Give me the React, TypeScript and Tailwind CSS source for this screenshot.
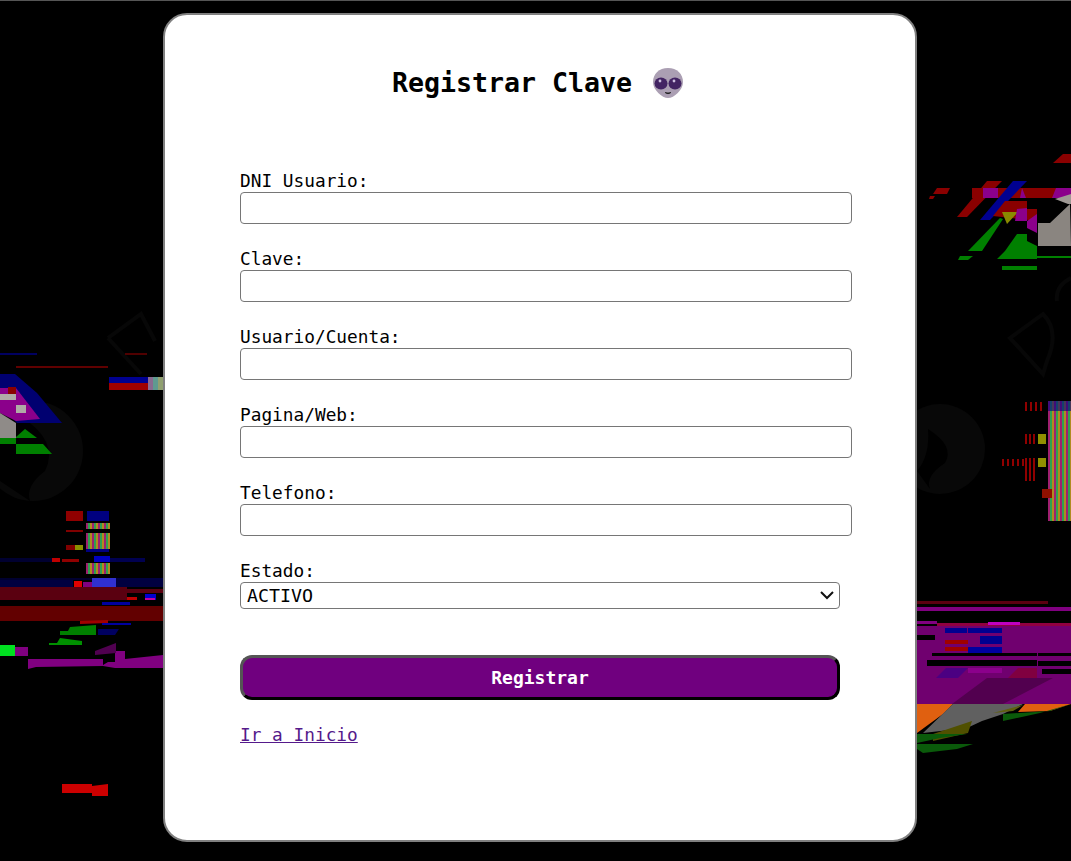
import React from 'react';

const fields = ['DNI Usuario:', 'Clave:', 'Usuario/Cuenta:', 'Pagina/Web:', 'Telefono:'];

// [color, points]
const shapes: [string, string][] = [
  // left glitch, top
  ['#000070', '0,373 15,373 37,392 62,422 17,422 0,405'],
  ['#8b008b', '0,387 16,387 40,418 16,420 0,412'],
  ['#8a0000', '8,386 16,386 16,393 8,393'],
  ['#b0aaa6', '0,393 16,393 16,399 0,399'],
  ['#b0aaa6', '16,404 26,404 26,412 16,412'],
  ['#8f8b88', '0,412 16,422 16,437 0,437'],
  ['#008000', '0,437 16,437 16,443 0,443'],
  ['#008000', '16,436 25,428 37,437 16,437'],
  ['#008000', '16,443 43,443 52,453 16,453'],
  // left glitch, block above the card edge
  ['#000090', '109,376 148,376 148,382 109,382'],
  ['#a00000', '109,382 148,382 148,389 109,389'],
  ['#8a6a90', '148,376 153,376 153,389 148,389'],
  ['#5f9a90', '153,376 158,376 158,389 153,389'],
  ['#90a070', '158,376 163,376 163,389 158,389'],
  ['#600000', '16,365 108,365 108,367 16,367'],
  ['#000060', '0,352 37,352 37,354 0,354'],
  ['#500000', '125,352 147,352 147,354 125,354'],
  // left glitch, middle column
  ['#900000', '66,510 83,510 83,520 66,520'],
  ['#000080', '87,510 109,510 109,520 87,520'],
  ['#800000', '66,529 83,529 83,531 66,531'],
  ['#800000', '66,544 75,544 75,549 66,549'],
  ['#8a9000', '75,544 83,544 83,549 75,549'],
  ['#000080', '86,548 109,548 109,551 86,551'],
  ['#000030', '0,557 52,557 52,561 0,561'],
  ['#c00000', '52,557 60,557 60,561 52,561'],
  ['#900000', '62,558 79,558 79,561 62,561'],
  ['#0000c0', '94,555 110,555 110,561 94,561'],
  ['#000050', '110,557 145,557 145,561 110,561'],
  ['#000030', '0,577 163,577 163,579 0,579'],
  ['#000040', '0,579 73,579 73,586 0,586'],
  ['#e00000', '74,580 82,580 82,587 74,587'],
  ['#800080', '83,581 92,581 92,587 83,587'],
  ['#3030d0', '92,577 116,577 116,587 92,587'],
  ['#000040', '116,577 163,577 163,586 116,586'],
  // left dark red bands
  ['#5a0010', '0,586 127,586 127,599 0,599'],
  ['#5a0010', '127,588 163,588 163,592 127,592'],
  ['#c00000', '127,596 137,596 137,599 127,599'],
  ['#0000d0', '145,593 156,593 156,599 145,599'],
  ['#c000a0', '145,597 155,597 155,599 145,599'],
  ['#0000a0', '102,601 130,601 130,604 102,604'],
  ['#620000', '0,605 163,605 163,620 0,620'],
  ['#a00000', '80,620 108,619 108,622 80,623'],
  ['#0000a0', '102,622 131,622 131,624 102,624'],
  ['#008000', '60,630 68,630 70,626 96,624 96,634 60,634'],
  ['#000060', '98,628 119,628 115,634 98,634'],
  ['#009000', '49,642 57,642 60,637 82,640 82,644 49,644'],
  ['#00e020', '0,644 15,644 15,655 0,655'],
  ['#800080', '15,646 28,646 28,655 15,655'],
  ['#800080', '28,658 103,658 103,664 108,661 115,661 115,650 125,650 125,658 163,654 163,667 115,667 103,665 36,666 28,668'],
  ['#500050', '95,650 116,642 116,652 95,654'],
  // bottom red
  ['#cc0000', '62,783 92,783 92,785 108,783 108,795 92,795 92,792 62,792'],
  // right glitch, top
  ['#8a0000', '1053,162 1063,153 1071,153 1071,162'],
  ['#8a0000', '937,187 950,187 947,193 933,193'],
  ['#8a0000', '930,195 935,195 933,198 929,198'],
  ['#8a0000', '972,187 1071,187 1060,197 972,197'],
  ['#8a0000', '987,180 1002,180 967,216 957,216'],
  ['#000090', '1013,180 1027,180 990,219 980,219'],
  ['#8b008b', '983,187 998,187 998,197 983,197'],
  ['#8b008b', '1022,187 1026,197 1020,197'],
  ['#8b008b', '1056,187 1071,187 1071,197 1052,197'],
  ['#8a0000', '1005,200 1027,200 1027,208 1037,208 1037,220 993,215'],
  ['#8a8a00', '1002,211 1018,211 1007,223'],
  ['#8b008b', '1017,208 1027,207 1027,220 1015,220'],
  ['#8b008b', '1027,220 1037,213 1037,232 1027,227'],
  ['#008000', '1000,217 968,250 982,250 1003,218'],
  ['#008000', '1017,233 1027,233 1027,240 1037,245 1037,258 997,258 1005,250'],
  ['#008000', '960,255 973,255 968,259 958,259'],
  ['#008000', '1037,255 1071,255 1071,257 1037,257'],
  ['#008000', '1002,265 1037,265 1037,269 1002,269'],
  ['#8a8580', '1038,222 1050,222 1070,203 1071,245 1038,245'],
  ['#a09a95', '1055,198 1071,193 1071,203 1068,203'],
  // right glitch, bottom
  ['#5a0010', '917,600 1048,600 1048,603 917,603'],
  ['#800080', '917,606 1071,606 1071,610 917,610'],
  ['#800080', '917,620 937,620 937,623 917,623'],
  ['#900040', '937,622 1071,622 1071,625 937,625'],
  ['#c000c0', '988,621 1020,621 1020,624 988,624'],
  ['#70006f', '917,625 1071,625 1071,703 917,703'],
  ['#000090', '945,627 967,627 967,632 945,632'],
  ['#000090', '968,627 1002,627 1002,632 968,632'],
  ['#000000', '917,634 935,634 935,639 917,639'],
  ['#000090', '980,635 1002,635 1002,643 980,643'],
  ['#a00000', '945,639 968,639 968,643 945,643'],
  ['#a00000', '945,646 968,646 968,650 945,650'],
  ['#0000a0', '968,646 1002,646 1002,653 968,653'],
  ['#000000', '932,652 1037,652 1037,655 932,655'],
  ['#000000', '1038,652 1071,652 1071,655 1038,655'],
  ['#000000', '927,659 1037,659 1037,665 927,665'],
  ['#000000', '1038,660 1071,660 1071,665 1038,665'],
  ['#000000', '1042,668 1071,668 1071,673 1042,673'],
  ['#4b0082', '946,667 968,667 958,677 936,677'],
  ['#8b008b', '968,667 1002,667 1002,672 968,672'],
  ['#800040', '1018,667 1037,667 1037,677 1008,677'],
  ['#52004f', '987,677 1053,677 1003,703 952,703'],
  ['#e06010', '917,703 953,703 943,713 917,732'],
  ['#606060', '953,703 1023,703 1003,713 982,720 967,727 923,732'],
  ['#e06010', '1025,703 1071,703 1050,710 1018,711'],
  ['#606010', '993,712 1023,704 1013,710'],
  ['#0a5a0a', '1003,713 1050,710 1071,703 1040,712 1003,720'],
  ['#505000', '933,733 972,720 968,732 933,740'],
  ['#0a5a0a', '917,733 967,733 940,737 917,742'],
  ['#0a5a0a', '917,743 973,743 957,748 923,752 917,748'],
];

// vertical colour fringes of the broken image: [x, y, width, height]
const stripeBlocks = [
  [1048, 400, 23, 120],
  [86, 522, 23, 6],
  [86, 532, 23, 11],
  [86, 543, 23, 5],
  [86, 562, 23, 11],
];

function Background() {
  return (
    <svg className="absolute inset-0" width="1071" height="861" viewBox="0 0 1071 861">
      {/* faded logo watermarks */}
      <circle cx="33" cy="450" r="50" fill="#080808" />
      <path d="M20 415 Q60 440 45 470 Q25 485 30 500 L0 480 L0 420 Z" fill="#000" />
      <circle cx="940" cy="448" r="45" fill="#080808" />
      <path d="M928 428 Q955 445 945 462 Q925 475 930 488 L917 470 Q930 455 928 428 Z" fill="#000" />
      <path d="M108 337 L141 313 L155 340 M108 337 L141 373" stroke="#070707" strokeWidth="4" fill="none" />
      <path d="M1010 337 L1043 313 Q1060 330 1047 360 L1043 373 Z" stroke="#070707" strokeWidth="4" fill="none" />
      <path d="M1057 300 Q1055 285 1071 277" stroke="#070707" strokeWidth="4" fill="none" />
      {shapes.map(([color, points], i) => (
        <polygon key={i} points={points} fill={color} />
      ))}
      {stripeBlocks.map(([x, y, w, h]) =>
        Array.from({ length: Math.ceil(w / 6) }, (_, i) => (
          <g key={`${x}-${y}-${i}`}>
            <rect x={x + i * 6} y={y} width="2" height={h} fill="#a02070" />
            <rect x={x + i * 6 + 2} y={y} width="2" height={h} fill="#30a050" />
            <rect x={x + i * 6 + 4} y={y} width="2" height={h} fill="#b08a20" />
          </g>
        )),
      )}
      <rect x="1048" y="400" width="23" height="10" fill="#000080" opacity="0.6" />
      {[1025, 1030, 1035, 1040].map((x) => (
        <rect key={x} x={x} y="401" width="2" height="9" fill="#900000" />
      ))}
      {[1025, 1029, 1033].map((x) => (
        <g key={x}>
          <rect x={x} y="433" width="2" height="10" fill="#900000" />
          <rect x={x} y="457" width="2" height="8" fill="#900000" />
          <rect x={x} y="465" width="2" height="15" fill="#900000" />
        </g>
      ))}
      <rect x="1038" y="433" width="8" height="10" fill="#909000" />
      <rect x="1038" y="457" width="8" height="9" fill="#909000" />
      {[1002, 1007, 1012, 1017, 1022].map((x) => (
        <rect key={x} x={x} y="458" width="2" height="7" fill="#900000" />
      ))}
      <rect x="1042" y="488" width="10" height="9" fill="#901000" />
    </svg>
  );
}

function AlienIcon() {
  return (
    <svg width="30" height="30" viewBox="0 0 30 30">
      <path d="M15 0 C24 0 30 6 30 14 C30 22 21 30 15 30 C9 30 0 22 0 14 C0 6 6 0 15 0 Z" fill="#ab9fb3" />
      <ellipse cx="8" cy="15.5" rx="6.5" ry="6" fill="#432463" />
      <ellipse cx="22" cy="15.5" rx="6.5" ry="6" fill="#432463" />
      <circle cx="7" cy="13" r="1.4" fill="#cdbfe0" />
      <circle cx="21" cy="13" r="1.4" fill="#cdbfe0" />
      <path d="M12 24.5 Q15 27 18 24.5" fill="#222" stroke="#222" strokeWidth="1" />
    </svg>
  );
}

export default function App() {
  return (
    <div className="relative h-[861px] overflow-hidden bg-black border-t border-[#555] font-['DejaVu_Sans_Mono',monospace] text-[17.8px] text-black">
      <Background />
      <div className="relative ml-[163px] mt-3 h-[829px] w-[754px] rounded-3xl border-2 border-[#808080] bg-white pl-[75px] pt-[50px]">
        <div className="flex w-[595px] items-center justify-center gap-[21px]">
          <h1 className="text-[26.6px] leading-9 font-bold">Registrar Clave</h1>
          <AlienIcon />
        </div>

        <form className="mt-[69px]">
          {fields.map((label) => (
            <div key={label} className="mb-6">
              <label className="block h-[22px] leading-[22px]">{label}</label>
              <input type="text" className="block h-8 w-[612px] rounded border border-[#767676] bg-white px-2" />
            </div>
          ))}

          <label className="block h-[22px] leading-[22px]">Estado:</label>
          <div className="relative h-[27px] w-[600px]">
            <select className="block h-[27px] w-full appearance-none rounded border border-[#767676] bg-white pl-1.5 text-[18.3px] leading-[25px]">
              <option>ACTIVO</option>
              <option>INACTIVO</option>
            </select>
            <svg className="pointer-events-none absolute right-[6px] top-[8px]" width="14" height="10" viewBox="0 0 14 10">
              <path d="M1 2 L7 8 L13 2" fill="none" stroke="#111" strokeWidth="2" />
            </svg>
          </div>

          <button
            type="button"
            className="mt-[46px] block h-[45px] w-[600px] rounded-xl border-[3px] border-t-[#555] border-l-[#555] border-r-black border-b-black bg-[#70007f] text-[18px] font-bold text-white"
          >
            Registrar
          </button>
        </form>

        <a href="#" className="mt-[23px] block w-fit leading-[24px] text-[#551a8b] underline">
          Ir a Inicio
        </a>
      </div>
    </div>
  );
}
